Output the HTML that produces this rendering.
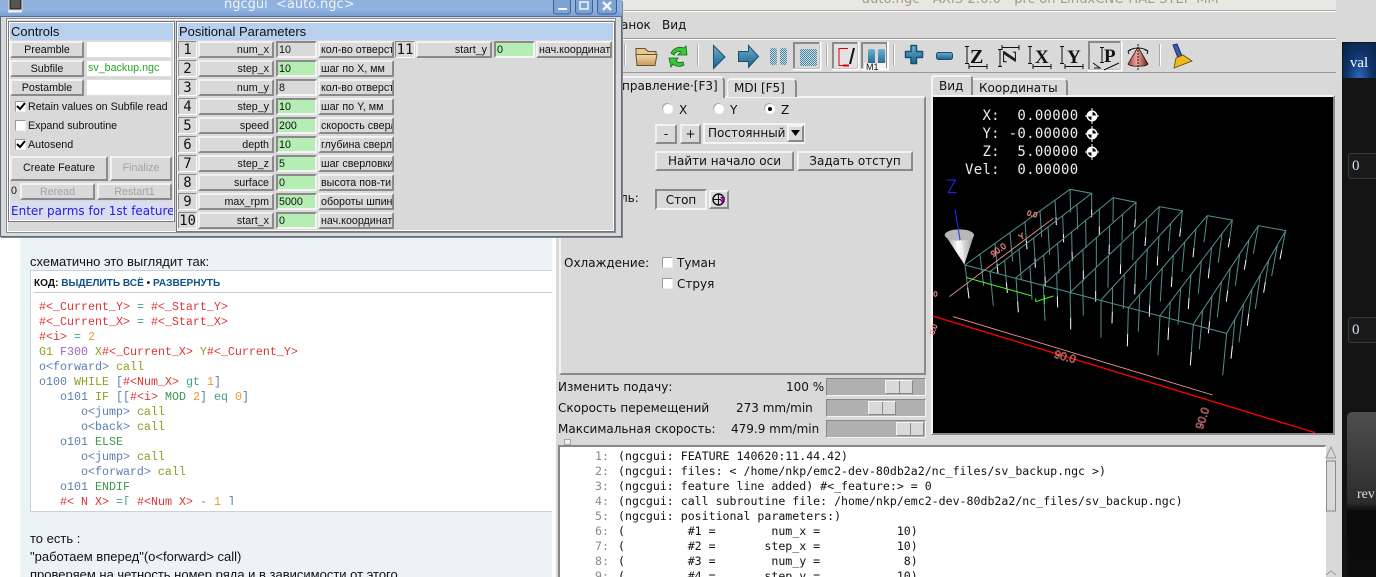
<!DOCTYPE html>
<html><head><meta charset="utf-8"><style>
html,body{margin:0;padding:0;background:#fff}
#r{position:relative;width:1376px;height:577px;overflow:hidden;background:#d9d9d9;font-family:"DejaVu Sans",sans-serif;font-size:12px;color:#111}
#r div,#r span.a,#r pre,#r svg{position:absolute}
pre{margin:0}
.btn{box-sizing:border-box;background:#d9d9d9;border:2px solid;border-color:#f2f2f2 #8a8a8a #8a8a8a #f2f2f2;text-align:center;white-space:nowrap;overflow:hidden}
.sun{box-sizing:border-box;background:#d9d9d9;border:2px solid;border-color:#8a8a8a #f4f4f4 #f4f4f4 #8a8a8a;white-space:nowrap;overflow:hidden}
.n{font-family:"Liberation Sans",sans-serif;font-size:10.7px;line-height:14px}
.nb{left:178px;width:19px;height:17px;background:#d9d9d9;border-top:1px solid #8a8a8a;border-left:1px solid #8a8a8a;border-right:1px solid #fff;border-bottom:1px solid #fff;box-sizing:border-box;font:14px/16px "DejaVu Sans Mono",monospace;text-align:center;color:#111;white-space:nowrap}
.nm{left:198px;width:76px;height:17px;text-align:right;padding-right:3px}
.vl{left:276px;width:41px;height:17px;background:#b5edb5;padding-left:1px;border-color:#8a8a8a #f4f4f4 #f4f4f4 #8a8a8a}
.gr{background:#d9d9d9}
.cm{left:318px;width:76px;height:17px;text-align:left;padding-left:1px}
.chk{box-sizing:border-box;width:11px;height:11px;background:#fff;border:1px solid #9a9a9a;border-right-color:#eee;border-bottom-color:#eee;left:15px}
.lb{font-family:"Liberation Sans",sans-serif;font-size:10.7px;line-height:14px;white-space:nowrap}
.s{background:#b0b0b0;border:1px solid;border-color:#888 #f4f4f4 #f4f4f4 #888;box-sizing:border-box;left:826px;width:100px;height:18px}
.t{background:#d9d9d9;top:1px;height:14px;width:28px;border:1px solid;border-color:#f4f4f4 #888 #888 #f4f4f4;box-sizing:border-box}
.t:after{content:"";position:absolute;left:13px;top:0;width:1px;height:12px;background:#888}
.c{font-family:"Liberation Mono",monospace;font-size:11.67px;line-height:15px;color:#5a7fb0}
.c i{font-style:normal}.r{color:#e03434}.e{color:#3f9f90}.o{color:#f09a30}.g{color:#8f9f20}.p{color:#a068b8}.v{color:#3a9a50}
.txt{font-family:"Liberation Sans",sans-serif;font-size:13px;line-height:18px;color:#111;white-space:nowrap}
.ax{white-space:nowrap;line-height:14px}
.rd{width:10px;height:10px;border-radius:50%;background:#fff;box-shadow:-1px -1px 0 #aaa}
</style></head><body><div id="r">

<!-- web page at left -->
<div style="left:0;top:0;width:556px;height:577px;background:#fff"></div>
<div style="left:20px;top:230px;width:532px;height:347px;background:#ecf3f7"></div>
<div class="txt" style="left:30px;top:253px">схематично это выглядит так:</div>
<div style="left:30px;top:270px;width:522px;height:242px;background:#fff;border:1px solid #c9d2d8;border-right:0;box-sizing:border-box"></div>
<div style="left:34px;top:292px;width:518px;height:1px;background:#ccc"></div>
<div style="left:34px;top:277px;font:bold 10.1px/13px 'Liberation Sans',sans-serif;white-space:nowrap;color:#111">КОД: <span style="color:#105289">ВЫДЕЛИТЬ ВСЁ</span> • <span style="color:#105289">РАЗВЕРНУТЬ</span></div>
<div style="left:32px;top:296px;width:518px;height:209px;overflow:hidden">
<pre class="c" style="left:7px;top:4px"><i class="r">#&lt;_Current_Y&gt;</i> <i class="e">=</i> <i class="r">#&lt;_Start_Y&gt;</i>
<i class="r">#&lt;_Current_X&gt;</i> <i class="e">=</i> <i class="r">#&lt;_Start_X&gt;</i>
<i class="r">#&lt;i&gt;</i> <i class="e">=</i> <i class="o">2</i>
<i class="g">G1</i> <i class="p">F300</i> <i class="g">X</i><i class="r">#&lt;_Current_X&gt;</i> <i class="g">Y</i><i class="r">#&lt;_Current_Y&gt;</i>
o&lt;forward&gt; <i class="g">call</i>
o100 <i class="g">WHILE</i> <i style="color:#5a7fb0">[</i><i class="r">#&lt;Num_X&gt;</i> <i class="e">gt</i> <i class="o">1</i><i style="color:#5a7fb0">]</i>
   o101 <i class="g">IF</i> [[<i class="r">#&lt;i&gt;</i> <i class="v">MOD</i> <i class="o">2</i>] <i class="e">eq</i> <i class="o">0</i>]
      o&lt;jump&gt; <i class="g">call</i>
      o&lt;back&gt; <i class="g">call</i>
   o101 <i class="v">ELSE</i>
      o&lt;jump&gt; <i class="g">call</i>
      o&lt;forward&gt; <i class="g">call</i>
   o101 <i class="v">ENDIF</i>
   <i class="r">#&lt;_N_X&gt;</i> <i class="e">=[</i> <i class="r">#&lt;Num_X&gt;</i> <i class="e">-</i> <i class="o">1</i> <i style="color:#5a7fb0">]</i></pre>
</div>
<div class="txt" style="left:30px;top:530px">то есть :</div>
<div class="txt" style="left:30px;top:548px">"работаем вперед"(o&lt;forward&gt; call)</div>
<div class="txt" style="left:30px;top:566px">проверяем на четность номер ряда и в зависимости от этого</div>

<!-- axis window -->
<div style="left:556px;top:0;width:786px;height:10px;background:#e9e7e3"></div>
<div style="left:556px;top:10px;width:786px;height:1px;background:#aaa"></div>
<div style="left:556px;top:11px;width:786px;height:1px;background:#fff"></div>
<div style="left:862px;top:-8px;color:#a09a96;font-size:13px;line-height:16px;white-space:nowrap;letter-spacing:.1px">auto.ngc - AXIS 2.6.0 - prc on LinuxCNC-HAL-STEP-MM</div>
<div style="left:556px;top:38px;width:786px;height:1px;background:#999"></div>
<div style="left:556px;top:39px;width:786px;height:1px;background:#fff"></div>
<div style="left:556px;top:72px;width:782px;height:1px;background:#999"></div>
<div style="left:1337px;top:39px;width:1px;height:34px;background:#999"></div>
<div class="ax" style="left:621px;top:18px">анок</div>
<div class="ax" style="left:662px;top:18px">Вид</div>

<!-- toolbar (coordinates are page coordinates) -->
<svg style="left:620px;top:38px" width="600" height="36" viewBox="620 38 600 36">
<defs>
<linearGradient id="bl" x1="0" y1="0" x2="0" y2="1"><stop offset="0" stop-color="#6fb0d0"/><stop offset="1" stop-color="#1a5f8a"/></linearGradient>
<linearGradient id="fo" x1="0" y1="0" x2="0" y2="1"><stop offset="0" stop-color="#f2d9a8"/><stop offset="1" stop-color="#c89a58"/></linearGradient>
<linearGradient id="cn" x1="0" y1="0" x2="1" y2="0"><stop offset="0" stop-color="#a04038"/><stop offset=".45" stop-color="#f0a8a0"/><stop offset="1" stop-color="#602018"/></linearGradient>
<pattern id="dot" width="2" height="2" patternUnits="userSpaceOnUse"><rect width="2" height="2" fill="#d9d9d9"/><rect width="1" height="1" fill="#3c86aa"/><rect x="1" y="1" width="1" height="1" fill="#3c86aa"/></pattern>
</defs>
<path d="M624.500 44V66M697.500 44V66M826.500 44V66M893.500 44V66M1159.500 44V66" stroke="#aaa"/>
<path d="M625.500 44V66M698.500 44V66M827.500 44V66M894.500 44V66M1160.500 44V66" stroke="#fff"/>
<path d="M636 48.500h9l3 3h8v4h-20z" fill="#e8c990" stroke="#6a5030"/>
<path d="M636 54.500h21l-2 11h-18z" fill="url(#fo)" stroke="#6a5030"/>
<path d="M671 53c3-5 8-7 13-5l2-2 1 9-9 0 3-3c-3-1-6 0-7 3z" fill="#3cc43c" stroke="#0b6a0b" stroke-width=".8"/>
<path d="M684 65c-3 2-8 2-11-1l-2 3-2-9 9 0-2 3c2 2 4 2 7 1z" fill="#3cc43c" stroke="#0b6a0b" stroke-width=".8"/>
<path d="M713.500 45.500l11.500 11.500-11.500 11.500z" fill="url(#bl)" stroke="#175070"/>
<path d="M738.500 51.500h10v-6l10 11-10 11v-6h-10z" fill="url(#bl)" stroke="#175070"/>
<rect x="770" y="48" width="7" height="17" rx="2" fill="url(#dot)"/><rect x="780" y="48" width="7" height="17" rx="2" fill="url(#dot)"/>
<rect x="794" y="43" width="26" height="26" fill="#d9d9d9" stroke="#8a8a8a" stroke-width="2"/><path d="M793 69.500h27.500V42" stroke="#fff" stroke-width="2" fill="none"/>
<rect x="800" y="49" width="17" height="17" fill="url(#dot)"/>
<rect x="833" y="43" width="25" height="26" fill="#e2e2e2" stroke="#8a8a8a" stroke-width="2"/><path d="M832 69.500h26.500V42" stroke="#fff" stroke-width="2" fill="none"/>
<path d="M848 48.500h-9v17h7" fill="none" stroke="#e00000"/><path d="M843 65.500h6" stroke="#e00000" stroke-width="2"/><path d="M854 48l-4 16" stroke="#111" stroke-width="2"/>
<rect x="862" y="43" width="25" height="26" fill="#d9d9d9" stroke="#8a8a8a" stroke-width="2"/><path d="M861 69.500h27V42" stroke="#fff" stroke-width="2" fill="none"/>
<rect x="868" y="49" width="7" height="17" rx="2" fill="url(#bl)"/><rect x="878" y="49" width="7" height="17" rx="2" fill="url(#bl)"/>
<rect x="864" y="63" width="22" height="6" fill="#f4f4f4"/>
<text x="866" y="70" font-family="Liberation Sans,sans-serif" font-size="9" fill="#111">M1</text>
<path d="M911.500 52.500v-6h5.500v6h6v6h-6v6h-5.500v-6h-5.500v-6z" fill="url(#bl)" stroke="#175070" stroke-linejoin="round" stroke-width="1.500" transform="translate(-.5 -1)"/>
<rect x="936.500" y="52.500" width="16" height="7" rx="2" fill="url(#bl)" stroke="#175070"/>
<g font-family="Liberation Serif,serif" font-weight="bold" font-size="20" fill="#111">
<path d="M965 46.500h4M967 46V63M965 63.500h4M969 66.500H987M969 64v5M987 64v5" stroke="#111" fill="none"/><text x="970" y="63">Z</text>
<path d="M998 49.500h4M1000 49V66M998 66.500h4M1002 47.500H1019M1002 45v5M1019 45v5" stroke="#111" fill="none"/><text transform="rotate(90 1010 57)" x="1003" y="64" fill="#222">Z</text>
<path d="M1028 46.500h4M1030 46V63M1028 63.500h4M1033 66.500H1051M1033 64v5M1051 64v5" stroke="#111" fill="none"/><text x="1035" y="63" font-size="19">X</text>
<path d="M1060 46.500h4M1062 46V63M1060 63.500h4M1065 66.500H1083M1065 64v5M1083 64v5" stroke="#111" fill="none"/><text x="1067" y="63" font-size="19">Y</text>
<rect x="1089" y="42" width="32" height="28" fill="#d9d9d9" stroke="#8a8a8a" stroke-width="2"/><path d="M1088 70.500h33.500V41" stroke="#fff" stroke-width="2" fill="none"/>
<path d="M1100 47.500h4M1102 47V62M1100 62.500h4M1093 63l7 5-6 0M1104 70l15-7" stroke="#111" fill="none"/><text x="1104" y="62" font-size="19">P</text>
</g>
<path d="M1128 64c2 3 18 3 20 0l-10-17z" fill="url(#cn)" stroke="#301010" stroke-width=".8"/>
<path d="M1138 44V71" stroke="#111" stroke-dasharray="2 1"/>
<path d="M1128 51c6-4 14-4 20 0M1128 51l1 3M1128 51l3-1M1148 51l-1 3M1148 51l-3-1" fill="none" stroke="#111"/>
<path d="M1173 45l4-1 5 12-4 2z" fill="#3a58b0" stroke="#203070"/>
<path d="M1176 58l7-3 9 6-18 7z" fill="#f0b818" stroke="#604808" stroke-width=".8"/>
</svg>

<!-- control tabs -->
<div style="left:559px;top:96px;width:367px;height:279px;background:#d9d9d9;border-top:2px solid #f4f4f4;border-right:2px solid #8a8a8a;border-bottom:2px solid #8a8a8a;border-left:2px solid #f4f4f4;box-sizing:border-box"></div>
<div style="left:600px;top:76px;width:125px;height:22px;background:#d9d9d9;border-top:2px solid #f4f4f4;border-right:2px solid #8a8a8a;box-sizing:border-box;border-radius:0 5px 0 0"></div>
<div style="left:727px;top:78px;width:70px;height:19px;background:#d9d9d9;border-top:2px solid #f4f4f4;border-left:1px solid #f4f4f4;border-right:2px solid #8a8a8a;box-sizing:border-box;border-radius:4px 5px 0 0"></div>
<div class="ax" style="left:622px;top:79px">правление·[F3]</div>
<div class="ax" style="left:734px;top:81px">MDI [F5]</div>

<div class="rd" style="left:663px;top:104px"></div><div class="ax" style="left:679px;top:103px">X</div>
<div class="rd" style="left:714px;top:104px"></div><div class="ax" style="left:730px;top:103px">Y</div>
<div class="rd" style="left:765px;top:104px"></div><div style="left:768px;top:107px;width:4px;height:4px;background:#000;border-radius:50%"></div><div class="ax" style="left:781px;top:103px">Z</div>
<div class="btn" style="left:655px;top:124px;width:22px;height:20px;line-height:16px">-</div>
<div class="btn" style="left:680px;top:124px;width:21px;height:20px;line-height:16px">+</div>
<div class="sun" style="left:703px;top:123px;width:102px;height:21px;line-height:17px;padding-left:3px;border-color:#f4f4f4 #f4f4f4 #f4f4f4 #f4f4f4;text-align:left">Постоянный</div>
<div class="btn" style="left:787px;top:125px;width:17px;height:17px"></div>
<svg style="left:790px;top:130px" width="11" height="7"><path d="M1 0h9l-4.500 6z" fill="#000"/></svg>
<div class="btn" style="left:655px;top:151px;width:139px;height:20px;line-height:16px">Найти начало оси</div>
<div class="btn" style="left:797px;top:151px;width:116px;height:20px;line-height:16px">Задать отступ</div>
<div class="ax" style="left:620px;top:191px">ль:</div>
<div class="sun" style="left:655px;top:189px;width:52px;height:21px;line-height:18px;text-align:center">Стоп</div>
<div class="btn" style="left:709px;top:190px;width:20px;height:19px"></div>
<svg style="left:710px;top:191px" width="18" height="17"><circle cx="8.500" cy="8.500" r="5.500" fill="none" stroke="#111" stroke-width="1.500"/><path d="M8.500 3v11M3 8.500h8" stroke="#111"/><path d="M10 9h4l-2 3zM10 6h5v3h-3z" fill="#901090"/></svg>
<div class="ax" style="left:564px;top:256px">Охлаждение:</div>
<div class="chk" style="left:662px;top:257px"></div><div class="ax" style="left:677px;top:256px">Туман</div>
<div class="chk" style="left:662px;top:278px"></div><div class="ax" style="left:677px;top:277px">Струя</div>

<!-- sliders -->
<div class="ax" style="left:558px;top:380px">Изменить подачу:</div><div class="ax" style="left:786px;top:380px">100 %</div>
<div class="s" style="top:378px"><div class="t" style="left:58px"></div></div>
<div class="ax" style="left:558px;top:401px">Скорость перемещений</div><div class="ax" style="left:736px;top:401px">273 mm/min</div>
<div class="s" style="top:399px"><div class="t" style="left:41px"></div></div>
<div class="ax" style="left:558px;top:422px">Максимальная скорость:</div><div class="ax" style="left:731px;top:422px">479.9 mm/min</div>
<div class="s" style="top:420px"><div class="t" style="left:69px"></div></div>
<div style="left:564px;top:439px;width:5px;height:4px;background:#f0f0f0;border:1px solid #aaa"></div>

<!-- text area -->
<div style="left:558px;top:445px;width:768px;height:132px;background:#fff;border-top:2px solid #888;border-left:2px solid #888;box-sizing:border-box"></div>
<pre style="left:595px;top:449px;font:11.6px/15px 'DejaVu Sans Mono',monospace;color:#8a8a8a">1:
2:
3:
4:
5:
6:
7:
8:
9:</pre>
<pre style="left:618px;top:449px;font:11.58px/15px 'DejaVu Sans Mono',monospace;color:#111">(ngcgui: FEATURE 140620:11.44.42)
(ngcgui: files: &lt; /home/nkp/emc2-dev-80db2a2/nc_files/sv_backup.ngc &gt;)
(ngcgui: feature line added) #&lt;_feature:&gt; = 0
(ngcgui: call subroutine file: /home/nkp/emc2-dev-80db2a2/nc_files/sv_backup.ngc)
(ngcgui: positional parameters:)
(         #1 =        num_x =           10)
(         #2 =       step_x =           10)
(         #3 =        num_y =            8)
(         #4 =       step_y =           10)</pre>
<div style="left:1325px;top:446px;width:12px;height:131px;background:#d9d9d9;border-left:1px solid #fff;box-sizing:border-box"></div>
<svg style="left:1325px;top:446px" width="12" height="131"><path d="M6 1l5 11H1z" fill="#d9d9d9" stroke="#999"/><rect x="1.500" y="15" width="9" height="50" fill="#d9d9d9" stroke="#888"/><path d="M1 129l5-4 5 4" fill="none" stroke="#999"/></svg>

<!-- plot tabs -->
<div style="left:931px;top:75px;width:42px;height:23px;background:#d9d9d9;border-top:2px solid #f4f4f4;border-left:2px solid #f4f4f4;border-right:2px solid #8a8a8a;box-sizing:border-box;border-radius:4px 4px 0 0"></div>
<div style="left:973px;top:78px;width:95px;height:19px;background:#d9d9d9;border-top:2px solid #f4f4f4;border-right:2px solid #8a8a8a;box-sizing:border-box;border-radius:0 5px 0 0"></div>
<div class="ax" style="left:939px;top:79px">Вид</div>
<div class="ax" style="left:979px;top:81px">Координаты</div>

<!-- plot -->
<div style="left:931px;top:95px;width:404px;height:340px;background:#000;border:2px solid;border-color:#f4f4f4 #8a8a8a #8a8a8a #f4f4f4;box-sizing:border-box"></div>
<pre style="left:965px;top:107px;font:14px/18px 'DejaVu Sans Mono',monospace;letter-spacing:.3px;color:#eee">  X:  0.00000
  Y: -0.00000
  Z:  5.00000
Vel:  0.00000</pre>
<svg style="left:1085px;top:108px" width="14" height="54">
<g id="hm"><circle cx="7" cy="8" r="5.500" fill="#fff"/><path d="M7 8V4a4 4 0 0 1 4 4zM7 8v4a4 4 0 0 1-4-4z" fill="#000"/><path d="M7 0v16M0 8h14" stroke="#fff"/></g>
<use href="#hm" y="18"/><use href="#hm" y="36"/>
</svg>
<svg id="plot" style="left:930px;top:170px;overflow:visible" width="410" height="270" viewBox="0 0 1230 810">
<defs><linearGradient id="cone" x1="0" y1="0" x2="1" y2="0"><stop offset="0" stop-color="#888"/><stop offset=".45" stop-color="#fff"/><stop offset="1" stop-color="#999"/></linearGradient></defs>
<g id="dr" stroke-width="3" fill="none"></g>
<g stroke="#558f8f" stroke-width="3" fill="none">
<path d="M105 285L890 490M105 285L420 58L485 70L180 305M258 323L550 83L618 97L340 345M420 368L688 110L757 122L513 390M595 413L832 137L907 150L690 437M790 463L985 167L1067 182L890 490"/>
</g>
<path d="M70 440L848 675M58 380L370 145" stroke="#ff9a9a" stroke-width="2.500" fill="none"/>
<path d="M8 438L1155 788" stroke="#ff0000" stroke-width="4"/>
<g font-family="Liberation Sans,sans-serif" font-size="34" fill="none" stroke="#ff9090" stroke-width="1.500">
<text transform="translate(370 562) rotate(16)">90.0</text>
<text transform="translate(818 780) rotate(-72)">90.0</text>
<text transform="translate(190 262) rotate(-37)" font-size="26">90.0</text>
<text transform="translate(290 135) rotate(15)" font-size="22">0.0</text>
<text transform="translate(272 210) rotate(-30)" font-size="24">Y</text>
<text transform="translate(10 380)" font-size="22">0</text>
<text transform="translate(12 495) rotate(-70)" font-size="22">0.0</text>
</g>
<path d="M110 323L303 377" stroke="#44ff22" stroke-width="3"/>
<path d="M317 395L370 378M343 375V402M317 395V385" stroke="#44ff22" stroke-width="3" fill="none"/>
<path d="M50 30H76L55 68H80" stroke="#2a2aff" stroke-width="3" fill="none"/>
<path d="M45 195A44 18 0 0 1 132 195L103 283Z" fill="url(#cone)"/>
<ellipse cx="88" cy="195" rx="44" ry="17" fill="#b8b8b8"/>
<path d="M75 118L90 210" stroke="#2a2aff" stroke-width="3"/>
<path d="M92 210L103 283" stroke="#fff" stroke-width="2"/>
</svg>
<script>
(function(){var F=[[105,285],[180,305],[258,323],[340,345],[420,368],[513,390],[595,413],[690,437],[790,463],[890,490]],B=[[420,58],[485,70],[550,83],[618,97],[688,110],[757,122],[832,137],[907,150],[985,167],[1067,182]],a="",w="";
for(var j=0;j<10;j++)for(var i=0;i<8;i++){var t=i/7,x=F[j][0]+(B[j][0]-F[j][0])*t,y=F[j][1]+(B[j][1]-F[j][1])*t,L=70+(y-58)*.13,dx=(500-x)*.03,bx=x+dx,by=y+L,m=.68,mx=x+dx*m,my=y+L*m;
if((i+j*3)%2==0){a+="M"+x.toFixed(0)+" "+y.toFixed(0)+"L"+mx.toFixed(0)+" "+my.toFixed(0);w+="M"+mx.toFixed(0)+" "+my.toFixed(0)+"L"+bx.toFixed(0)+" "+by.toFixed(0)}else a+="M"+x.toFixed(0)+" "+y.toFixed(0)+"L"+bx.toFixed(0)+" "+by.toFixed(0)}
document.getElementById("dr").innerHTML='<path d="'+a+'" stroke="#558f8f"/><path d="'+w+'" stroke="#fff"/>'})();
</script>

<!-- dark right panel -->
<div style="left:1342px;top:0;width:34px;height:577px;background:#141414"></div>
<div style="left:1336px;top:0;width:6px;height:577px;background:#d9d9d9"></div>
<div style="left:1342px;top:0;width:34px;height:42px;background:#d9d9d9"></div>
<div style="left:1343px;top:43px;width:33px;height:35px;background:radial-gradient(ellipse at 50% 110%,#2f6cc0 0,#0e3268 55%,#0a2448 100%);border-radius:4px 0 0 0;color:#fff;font:15px/41px 'Liberation Serif',serif;text-align:center;text-indent:-1px">val</div>
<div style="left:1348px;top:153px;width:30px;height:26px;background:#1a1a1a;border:1px solid #3a3a3a;border-radius:3px;box-sizing:border-box;color:#cfe0f0;font:15px/25px 'Liberation Serif',serif;padding-left:3px">0</div>
<div style="left:1348px;top:317px;width:30px;height:26px;background:#1a1a1a;border:1px solid #3a3a3a;border-radius:3px;box-sizing:border-box;color:#cfe0f0;font:15px/25px 'Liberation Serif',serif;padding-left:3px">0</div>
<div style="left:1347px;top:412px;width:32px;height:165px;background:linear-gradient(#4e4e4e 0,#2c2c2c 55%,#0a0a0a 60%,#0c0c0c 100%);border-radius:5px 0 0 5px;color:#ddd;font:14px/166px 'Liberation Serif',serif;padding-left:10px;box-sizing:border-box;white-space:nowrap;overflow:hidden">rev</div>

<!-- ngcgui window -->
<div style="left:0;top:0;width:622px;height:237px;background:#d9d9d9;border:1px solid #5a6a80;border-top:0;box-sizing:border-box;box-shadow:1px 1px 0 #888"></div>
<div style="left:0;top:0;width:622px;height:17px;background:linear-gradient(#8db0dc,#8fb2e0 60%,#7a9ed0);border-bottom:1px solid #4f6f9f;box-sizing:border-box"></div>
<div style="left:224px;top:-4px;color:#f0f4fa;font-size:13px;line-height:18px;white-space:pre">ngcgui  &lt;auto.ngc&gt;</div>
<svg style="left:6px;top:0" width="20" height="16"><rect x="3" y="-3" width="13" height="13" fill="#333" stroke="#ddd"/><rect x="5" y="-1" width="9" height="9" fill="#555"/><path d="M2 11.500h14" stroke="#f0f0f0" stroke-width="2"/></svg>
<svg style="left:552px;top:0" width="68" height="16">
<g fill="#7da2d4" stroke="#3f5f90"><rect x="1.500" y="-4" width="17" height="18" rx="3"/><rect x="23.500" y="-4" width="17" height="18" rx="3"/><rect x="45.500" y="-4" width="19" height="18" rx="3"/></g>
<path d="M6 9h9" stroke="#f4f6fb" stroke-width="2"/><rect x="28" y="2" width="8" height="7" fill="none" stroke="#f4f6fb" stroke-width="1.500"/><path d="M51 2l8 8M59 2l-8 8" stroke="#f4f6fb" stroke-width="2.400"/>
</svg>
<div style="left:6px;top:18px;width:610px;height:215px;border:1px solid #8a8a8a;outline:1px solid #fff;outline-offset:-2px;box-sizing:border-box"></div>

<!-- controls -->
<div style="left:8px;top:21px;width:167px;height:201px;border:1px solid #777;outline:1px solid #fff;outline-offset:-2px;box-sizing:border-box"></div>
<div style="left:10px;top:23px;width:163px;height:17px;background:#b8cfee;font:13px/17px 'Liberation Sans',sans-serif;padding-left:1px;box-sizing:border-box">Controls</div>
<div class="btn n" style="left:10px;top:41px;width:74px;height:17px">Preamble</div>
<div class="sun" style="left:86px;top:41px;width:86px;height:17px;background:#fff;border-width:1px;border-color:#ddd"></div>
<div class="btn n" style="left:10px;top:60px;width:74px;height:17px">Subfile</div>
<div class="sun n" style="left:86px;top:60px;width:86px;height:17px;background:#fff;border-width:1px;border-color:#ddd;color:#22a822;padding-left:1px">sv_backup.ngc</div>
<div class="btn n" style="left:10px;top:79px;width:74px;height:17px">Postamble</div>
<div class="sun" style="left:86px;top:79px;width:86px;height:17px;background:#fff;border-width:1px;border-color:#ddd"></div>
<div class="chk" style="top:101px"></div><svg style="left:16px;top:102px" width="10" height="10"><path d="M1 4l3 3 5-6" fill="none" stroke="#000" stroke-width="2"/></svg><div class="lb" style="left:28px;top:100px">Retain values on Subfile read</div>
<div class="chk" style="top:120px"></div><div class="lb" style="left:28px;top:119px">Expand subroutine</div>
<div class="chk" style="top:139px"></div><svg style="left:16px;top:140px" width="10" height="10"><path d="M1 4l3 3 5-6" fill="none" stroke="#000" stroke-width="2"/></svg><div class="lb" style="left:28px;top:138px">Autosend</div>
<div class="btn n" style="left:10px;top:156px;width:98px;height:25px;line-height:21px">Create Feature</div>
<div class="btn n" style="left:110px;top:156px;width:62px;height:25px;line-height:21px;color:#a3a3a3">Finalize</div>
<div class="lb" style="left:11px;top:184px">0</div>
<div class="btn n" style="left:20px;top:183px;width:75px;height:17px;color:#a3a3a3">Reread</div>
<div class="btn n" style="left:97px;top:183px;width:75px;height:17px;color:#a3a3a3">Restart1</div>
<div style="left:10px;top:201px;width:163px;height:19px;background:#dcdcf0;color:#2222dd;font-size:12px;line-height:20px;white-space:nowrap;overflow:hidden;padding-left:1px;box-sizing:border-box">Enter parms for 1st feature</div>

<!-- positional -->
<div style="left:176px;top:21px;width:439px;height:211px;border:1px solid #777;outline:1px solid #fff;outline-offset:-2px;box-sizing:border-box"></div>
<div style="left:178px;top:23px;width:435px;height:17px;background:#b8cfee;font:13px/17px 'Liberation Sans',sans-serif;padding-left:1px;box-sizing:border-box">Positional Parameters</div>

<div class="nb" style="top:41px">1</div><div class="btn n nm" style="top:41px">num_x</div><div class="sun n vl gr" style="top:41px">10</div><div class="btn n cm" style="top:41px">кол-во отверстий</div>
<div class="nb" style="top:60px">2</div><div class="btn n nm" style="top:60px">step_x</div><div class="sun n vl" style="top:60px">10</div><div class="btn n cm" style="top:60px">шаг по X, мм</div>
<div class="nb" style="top:79px">3</div><div class="btn n nm" style="top:79px">num_y</div><div class="sun n vl gr" style="top:79px">8</div><div class="btn n cm" style="top:79px">кол-во отверстий</div>
<div class="nb" style="top:98px">4</div><div class="btn n nm" style="top:98px">step_y</div><div class="sun n vl" style="top:98px">10</div><div class="btn n cm" style="top:98px">шаг по Y, мм</div>
<div class="nb" style="top:117px">5</div><div class="btn n nm" style="top:117px">speed</div><div class="sun n vl" style="top:117px">200</div><div class="btn n cm" style="top:117px">скорость сверловки</div>
<div class="nb" style="top:136px">6</div><div class="btn n nm" style="top:136px">depth</div><div class="sun n vl" style="top:136px">10</div><div class="btn n cm" style="top:136px">глубина сверловки</div>
<div class="nb" style="top:155px">7</div><div class="btn n nm" style="top:155px">step_z</div><div class="sun n vl" style="top:155px">5</div><div class="btn n cm" style="top:155px">шаг сверловки, мм</div>
<div class="nb" style="top:174px">8</div><div class="btn n nm" style="top:174px">surface</div><div class="sun n vl" style="top:174px">0</div><div class="btn n cm" style="top:174px">высота пов-ти Z</div>
<div class="nb" style="top:193px">9</div><div class="btn n nm" style="top:193px">max_rpm</div><div class="sun n vl" style="top:193px">5000</div><div class="btn n cm" style="top:193px">обороты шпинделя</div>
<div class="nb" style="top:212px">10</div><div class="btn n nm" style="top:212px">start_x</div><div class="sun n vl" style="top:212px">0</div><div class="btn n cm" style="top:212px">нач.координата X</div>
<div class="nb" style="left:395px;top:41px;width:20px">11</div><div class="btn n nm" style="left:416px;top:41px">start_y</div><div class="sun n vl" style="left:494px;top:41px">0</div><div class="btn n cm" style="left:536px;top:41px">нач.координата Y</div>
</div></body></html>
